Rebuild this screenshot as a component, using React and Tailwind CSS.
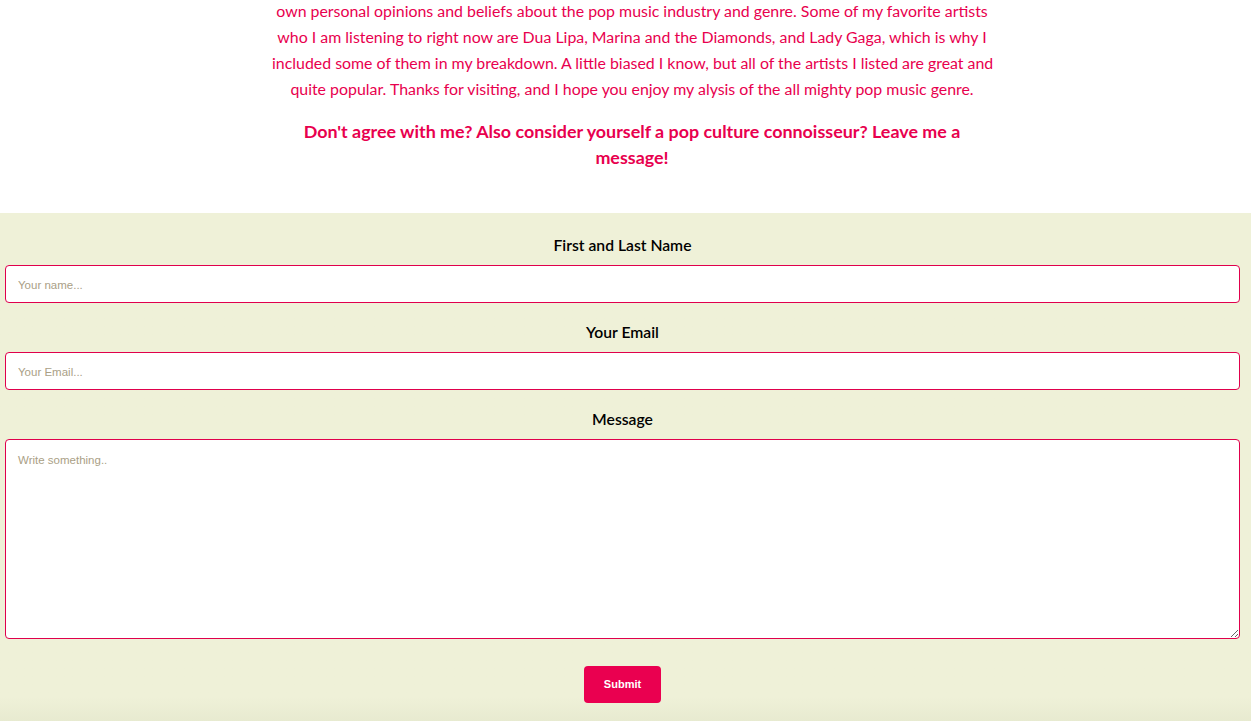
import React from "react";

// Contact section of the pop music blog
function App() {
  return (
    <div className="w-[1251px] h-[721px] overflow-hidden bg-white font-['Lato',sans-serif]">

      {/* INTRO TEXT */}
      <div className="pt-0 pb-[43px] -mt-[2px]">
        <div className="ml-[272px] w-[720px] text-center text-[#e8004e]">
          <p className="text-[15.9px] leading-[26px] whitespace-nowrap">
            own personal opinions and beliefs about the pop music industry and genre. Some of my favorite artists<br />
            who I am listening to right now are Dua Lipa, Marina and the Diamonds, and Lady Gaga, which is why I<br />
            included some of them in my breakdown. A little biased I know, but all of the artists I listed are great and<br />
            quite popular. Thanks for visiting, and I hope you enjoy my alysis of the all mighty pop music genre.
          </p>
          <p className="mt-4 text-[17.9px] leading-[26px] font-bold whitespace-nowrap">
            Don't agree with me? Also consider yourself a pop culture connoisseur? Leave me a<br />
            message!
          </p>
        </div>
      </div>

      {/* CONTACT FORM */}
      <div className="h-[520px] bg-gradient-to-b from-[#eff1d8] from-[93%] to-[#e4e7cc] pt-[23px]">
        <form className="flex flex-col">

          <label className="pr-[6px] text-center text-[15.7px] font-semibold text-black leading-[18px]">First and Last Name</label>
          <input
            type="text"
            placeholder="Your name..."
            className="mt-[11px] ml-[5px] w-[1235px] h-[38px] bg-white border border-[#e0004c] rounded-[4px] px-3 pt-[1px] text-[11.5px] font-['Liberation_Sans',sans-serif] placeholder:text-[#aaa086] outline-none"
          />

          <label className="mt-[20px] pr-[6px] text-center text-[15.7px] font-semibold text-black leading-[18px]">Your Email</label>
          <input
            type="text"
            placeholder="Your Email..."
            className="mt-[11px] ml-[5px] w-[1235px] h-[38px] bg-white border border-[#e0004c] rounded-[4px] px-3 pt-[1px] text-[11.5px] font-['Liberation_Sans',sans-serif] placeholder:text-[#aaa086] outline-none"
          />

          <label className="mt-[20px] pr-[6px] text-center text-[15.7px] font-semibold text-black leading-[18px]">Message</label>
          <textarea
            placeholder="Write something.."
            className="mt-[11px] ml-[5px] w-[1235px] h-[200px] bg-white border border-[#e0004c] rounded-[4px] px-3 py-3 text-[11.5px] font-['Liberation_Sans',sans-serif] placeholder:text-[#aaa086] outline-none"
          />

          <div className="mt-[27px] flex justify-center pr-[6px]">
            <button
              type="button"
              className="w-[77px] h-[37px] bg-[#ea0050] text-white text-[11px] font-semibold rounded-[4px] font-['Liberation_Sans',sans-serif]"
            >
              Submit
            </button>
          </div>

        </form>
      </div>

    </div>
  );
}

export default App;
